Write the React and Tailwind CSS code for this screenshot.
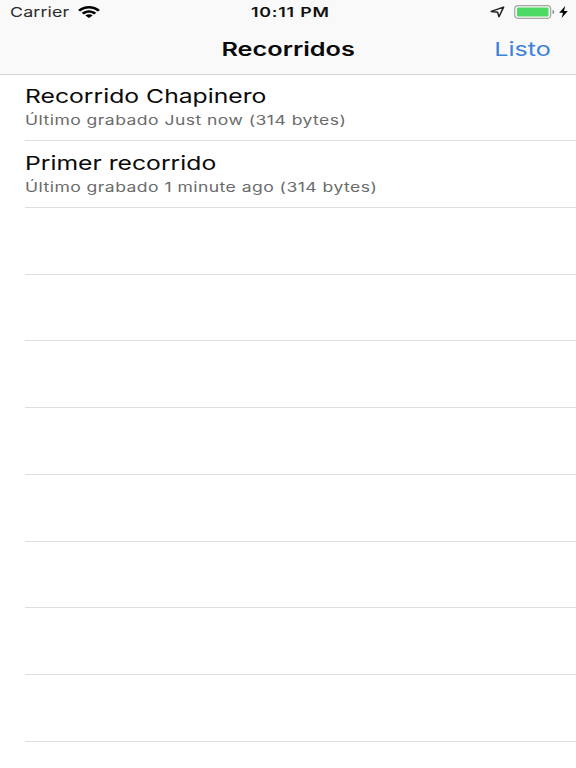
const recordings = [
  { name: 'Recorrido Chapinero', detail: 'Último grabado Just now (314 bytes)' },
  { name: 'Primer recorrido', detail: 'Último grabado 1 minute ago (314 bytes)' },
];

const emptyRows = Array.from({ length: 8 }, (_, i) => i);

function StatusBar() {
  return (
    <div className="grid h-[24px] grid-cols-[1fr_auto_1fr] items-center px-[10px] text-[#2b2b2b]">
      <div className="flex items-center">
        <span className="block w-[68px] origin-left scale-x-[1.32] pt-px text-[13.5px] leading-[23px] tracking-[0.1px] whitespace-nowrap">
          Carrier
        </span>
        <svg className="h-[12px] w-[22px]" viewBox="0 0 22 12" fill="#000">
          <path d="M0 3.9C6-1.3 16-1.3 22 3.9L19.8 5.6C14.8 1.5 7.2 1.5 2.2 5.6Z" />
          <path d="M3.7 6.8C7.9 3.3 14.1 3.3 18.3 6.8L16.1 8.4C13.2 6.1 8.8 6.1 5.9 8.4Z" />
          <path d="M7.3 9.4C9.4 7.8 12.6 7.8 14.7 9.4L11 12Z" />
        </svg>
      </div>
      <span className="block scale-x-[1.32] pt-px pl-[3px] text-[13.5px] leading-[23px] font-semibold tracking-[0.6px] text-[#111]">
        10:11 PM
      </span>
      <div className="flex items-center justify-end">
        <svg className="mr-[9px] h-[12px] w-[15px]" viewBox="0 0 15 12" fill="none" stroke="#222" strokeWidth="1.5" strokeLinejoin="round">
          <path d="M13.6 1.1L9 10.8L7.6 6.2L1.2 5.4Z" />
        </svg>
        <svg className="h-[14px] w-[41px]" viewBox="0 0 41 14" fill="none">
          <rect x="0.7" y="0.7" width="36" height="12.6" rx="3.2" stroke="#a3a6a3" strokeWidth="1.2" />
          <rect x="3" y="2.5" width="31.5" height="9" rx="1" fill="#4cd964" />
          <path d="M38.5 5C40.8 5.4 40.8 8.6 38.5 9Z" fill="#8c8c8c" />
        </svg>
        <svg className="-mr-[2px] ml-[4px] h-[12px] w-[9px]" viewBox="0 0 9 12">
          <path d="M6.2 0L.2 6.8H4L2.7 12L8.8 4.9H5Z" fill="#000" />
        </svg>
      </div>
    </div>
  );
}

export default function App() {
  return (
    <div className="flex h-[768px] w-[576px] flex-col overflow-hidden bg-white font-['Inter','Liberation_Sans',sans-serif] text-[#0a0a0a]">
      <header className="h-[75px] shrink-0 border-b border-[#d3d3d3] bg-[#f9f9f9]">
        <StatusBar />
        <div className="grid h-[50px] grid-cols-[1fr_auto_1fr] items-center px-[25px] pt-[2px]">
          <span />
          <h1 className="scale-x-[1.33] text-[19px] leading-6 font-semibold">Recorridos</h1>
          <button className="origin-right scale-x-[1.32] justify-self-end text-[19px] leading-6 text-[#3b82dc]">Listo</button>
        </div>
      </header>
      <ul className="-mt-[0.5px] ml-[25px]">
        {recordings.map((r) => (
          <li key={r.name} className="flex h-[66.72px] flex-col border-b border-[#dedede] pt-[10.4px]">
            <span className="block w-max origin-left scale-x-[1.3] text-[19px] leading-6">{r.name}</span>
            <span className="block w-max origin-left scale-x-[1.3] text-[13.5px] leading-[23px] tracking-[0.35px] text-[#6b6b6b]">
              {r.detail}
            </span>
          </li>
        ))}
        {emptyRows.map((n) => (
          <li key={n} className="h-[66.72px] border-b border-[#dedede]" />
        ))}
      </ul>
    </div>
  );
}
